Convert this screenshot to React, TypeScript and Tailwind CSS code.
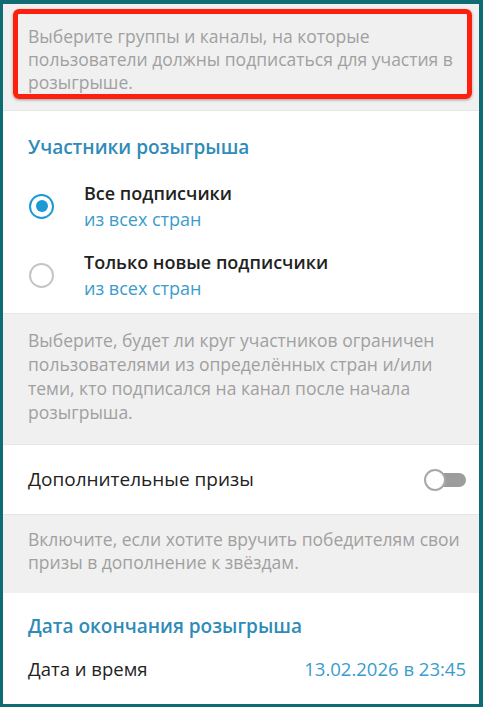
import React from "react";

const font = { fontFamily: '"Open Sans", "Noto Sans", sans-serif' };

function Radio({ checked }: { checked: boolean }) {
  return checked ? (
    <span className="flex h-[25px] w-[25px] shrink-0 items-center justify-center rounded-full border-[2.5px] border-[#1c9ad6]">
      <span className="h-[12px] w-[12px] rounded-full bg-[#1c9ad6]" />
    </span>
  ) : (
    <span className="h-[25px] w-[25px] shrink-0 rounded-full border-2 border-[#c4c4c4]" />
  );
}

function Option({ title, sub, checked }: { title: string; sub: string; checked: boolean }) {
  return (
    <div className="flex items-center gap-[30px] pl-[26px]">
      <Radio checked={checked} />
      <div className="leading-[26px]">
        <div className="text-[18px] font-semibold text-[#222]">{title}</div>
        <div className="text-[18px] text-[#3a9ccc]">{sub}</div>
      </div>
    </div>
  );
}

function Toggle() {
  return (
    <div className="relative h-[22px] w-[42px]">
      <div className="absolute right-0 top-[4px] h-[14px] w-[36px] rounded-full bg-[#9c9c9c]" />
      <div className="absolute left-0 top-0 h-[22px] w-[22px] rounded-full border-2 border-[#a8a8a8] bg-white" />
    </div>
  );
}

export default function App() {
  return (
    <div style={font} className="h-[707px] w-[483px] border-t-4 border-b-[3px] border-l-[3px] border-r-4 border-[#0e6c72] bg-white">
      <div className="relative bg-[#f0f0f0] pl-[25px] pr-[8px] pt-[21px] pb-[16px] text-[17.5px] leading-[23px] text-[#a0a0a0]">
        Выберите группы и каналы, на которые пользователи должны подписаться для участия в розыгрыше.
        <div className="absolute left-[10px] top-[5px] h-[90px] w-[459px] rounded-[6px] border-[5px] border-[#ff1f0f] shadow-[0_1px_3px_rgba(0,0,0,0.35)]" />
      </div>

      <div className="border-t border-[#e6e6e6] pt-[24px] pb-[12px]">
        <div className="pl-[25px] text-[19px] font-semibold leading-[24px] text-[#2f8bb8]">Участники розыгрыша</div>
        <div className="mt-[21px] flex flex-col gap-[17px]">
          <Option title="Все подписчики" sub="из всех стран" checked />
          <Option title="Только новые подписчики" sub="из всех стран" checked={false} />
        </div>
      </div>

      <div className="border-t border-[#e6e6e6] bg-[#f0f0f0] pl-[25px] pr-[8px] pt-[14px] pb-[20px] text-[17.5px] leading-[24px] text-[#a0a0a0]">
        Выберите, будет ли круг участников ограничен пользователями из определённых стран и/или теми, кто подписался на канал после начала розыгрыша.
      </div>

      <div className="flex h-[70px] items-center justify-between border-t border-[#e6e6e6] pl-[25px] pr-[13px]">
        <span className="text-[19px] text-[#222]">Дополнительные призы</span>
        <Toggle />
      </div>

      <div className="border-t border-[#e6e6e6] bg-[#f0f0f0] pl-[25px] pr-[8px] pt-[13px] pb-[19px] text-[17.5px] leading-[23px] text-[#a0a0a0]">
        Включите, если хотите вручить победителям свои призы в дополнение к звёздам.
      </div>

      <div className="pt-[21px]">
        <div className="pl-[25px] text-[19px] font-semibold leading-[24px] text-[#2f8bb8]">Дата окончания розыгрыша</div>
        <div className="mt-[19px] flex items-center justify-between pl-[25px] pr-[13px] text-[18.5px] leading-[24px]">
          <span className="text-[#222]">Дата и время</span>
          <span className="text-[#3a9ccc]">13.02.2026 в 23:45</span>
        </div>
      </div>
    </div>
  );
}
